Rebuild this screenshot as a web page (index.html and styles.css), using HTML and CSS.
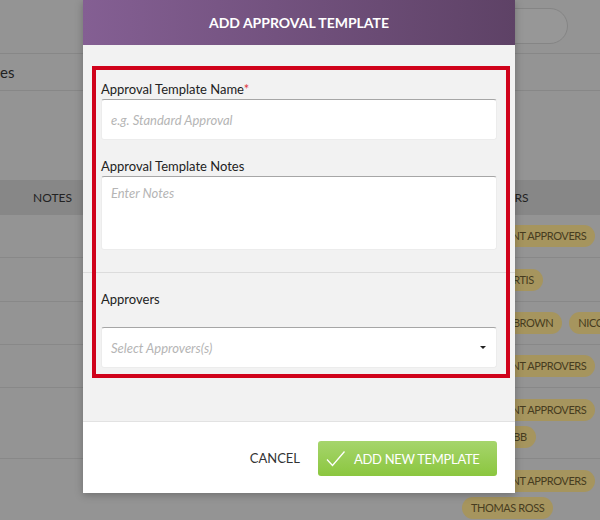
FILE: index.html
```html
<!DOCTYPE html>
<html>
<head>
<meta charset="utf-8">
<link rel="stylesheet" href="styles.css">
</head>
<body>
<div class="page">
  <div class="topbar"><div class="search"></div></div>
  <div class="subbar"><span class="subtitle">es</span></div>
  <div class="spacer"></div>
  <div class="table">
    <div class="row head"><div class="c1">NOTES</div><div class="c2"></div><div class="c3">APPROVERS</div></div>
    <div class="row r1"><div class="c1"></div><div class="c2"></div><div class="c3"><span class="pill">ALL CLIENT APPROVERS</span></div></div>
    <div class="row r2"><div class="c1"></div><div class="c2"></div><div class="c3"><span class="pill">JANE CURTIS</span></div></div>
    <div class="row r3"><div class="c1"></div><div class="c2"></div><div class="c3"><span class="pill">ROBERT BROWN</span><span class="pill">NICOLE HART</span></div></div>
    <div class="row r4"><div class="c1"></div><div class="c2"></div><div class="c3"><span class="pill">ALL CLIENT APPROVERS</span></div></div>
    <div class="row r5"><div class="c1"></div><div class="c2"></div><div class="c3 stack"><span class="pill">ALL CLIENT APPROVERS</span><span class="pill">ANN WEBB</span></div></div>
    <div class="row r6"><div class="c1"></div><div class="c2"></div><div class="c3 stack"><span class="pill">ALL CLIENT APPROVERS</span><span class="pill">THOMAS ROSS</span></div></div>
  </div>

  <div class="modal">
    <div class="modal-head">ADD APPROVAL TEMPLATE</div>
    <div class="modal-body">
      <div class="field">
        <label class="label">Approval Template Name<span class="req">*</span></label>
        <div class="input"><span class="ph">e.g. Standard Approval</span></div>
      </div>
      <div class="field second">
        <label class="label">Approval Template Notes</label>
        <div class="input textarea"><span class="ph">Enter Notes</span></div>
      </div>
      <div class="sep"></div>
      <div class="field third">
        <label class="label">Approvers</label>
        <div class="input select"><span class="ph">Select Approvers(s)</span><span class="caret"></span></div>
      </div>
      <div class="highlight"></div>
    </div>
    <div class="modal-foot">
      <span class="cancel">CANCEL</span>
      <span class="btn">
        <svg width="20" height="18" viewBox="0 0 20 18"><path d="M1 9.5 L6.5 15.5 L18.5 1.5" fill="none" stroke="#fff" stroke-width="1.3"/></svg>
        ADD NEW TEMPLATE
      </span>
    </div>
  </div>
</div>
</body>
</html>
```

FILE: styles.css
```css
* { box-sizing: border-box; }
html, body { margin: 0; padding: 0; }
body { font-family: Lato, "Open Sans", sans-serif; }
.page {
  position: relative;
  width: 600px;
  height: 520px;
  overflow: hidden;
  background: #949494;
}
.topbar {
  height: 54px;
  border-bottom: 1px solid #878787;
  display: flex;
  justify-content: flex-end;
}
.search {
  width: 260px;
  height: 36px;
  margin-top: 8px;
  margin-right: 32px;
  border: 1px solid #858585;
  border-radius: 18px;
  background: #979797;
}
.subbar {
  height: 37px;
  border-bottom: 1px solid #878787;
  display: flex;
  align-items: center;
}
.subtitle {
  font-size: 15px;
  color: #222;
  margin-top: -1px;
}
.spacer { height: 89px; }
.table { width: 700px; }
.row {
  display: grid;
  grid-template-columns: 100px 362px 238px;
  border-bottom: 1px solid #888;
}
.row.head {
  height: 35px;
  background: #878787;
  border-bottom: none;
  align-items: center;
  font-size: 12px;
  color: #222;
}
.head .c1 { padding-left: 33px; }
.head .c3 { margin-left: -2px; }
.c3 {
  display: flex;
  flex-wrap: nowrap;
  align-items: center;
  gap: 7px;
}
.c3.stack {
  flex-direction: column;
  align-items: flex-start;
  justify-content: center;
  gap: 5px;
}
.r1 { height: 43px; }
.r2 { height: 44px; }
.r3 { height: 43px; }
.r4 { height: 43px; }
.r5 { height: 71px; }
.r6 { height: 80px; }
.r6 .c3 { justify-content: flex-start; padding-top: 11px; }
.pill {
  display: inline-block;
  height: 22px;
  line-height: 22px;
  padding: 0 9px;
  border-radius: 11px;
  background: #a6955e;
  color: #463c20;
  font-size: 11px;
  letter-spacing: -0.4px;
  white-space: nowrap;
}

.modal {
  position: absolute;
  left: 83px;
  top: 0;
  width: 432px;
  height: 493px;
  display: flex;
  flex-direction: column;
  background: #fff;
  box-shadow: 0 2px 8px rgba(0,0,0,0.25);
}
.modal-head {
  height: 45px;
  flex: none;
  background: linear-gradient(90deg, #845f93 0%, #5e4266 100%);
  color: #fff;
  font-weight: bold;
  font-size: 14px;
  display: flex;
  align-items: center;
  justify-content: center;
}
.modal-body {
  position: relative;
  flex: 1;
  background: #f2f2f2;
  padding: 35px 18px 0;
}
.label {
  display: block;
  font-size: 13px;
  line-height: 18px;
  color: #222;
  margin-bottom: 1px;
}
.req { color: #e0383e; }
.input {
  height: 41px;
  background: #fff;
  border: 1px solid #ececec;
  border-top-color: #a6a6a6;
  border-radius: 3px;
  display: flex;
  align-items: center;
  padding: 0 9px;
  position: relative;
}
.ph {
  font-style: italic;
  font-size: 13px;
  color: #b5b5b5;
}
.field.second { margin-top: 17px; }
.textarea {
  height: 74px;
  align-items: flex-start;
  padding-top: 8px;
}
.sep {
  margin: 22px -18px 0;
  border-top: 1px solid #dcdcdc;
}
.field.third { padding-top: 17px; }
.field.third .label { margin-bottom: 19px; }
.select { justify-content: space-between; padding-right: 10px; }
.caret {
  width: 0;
  height: 0;
  border-left: 3px solid transparent;
  border-right: 3px solid transparent;
  border-top: 3px solid #222;
}
.highlight {
  position: absolute;
  left: 9px;
  top: 21px;
  width: 418px;
  height: 312px;
  border: 4px solid #d0021b;
  pointer-events: none;
}
.modal-foot {
  height: 72px;
  flex: none;
  border-top: 1px solid #e2e2e2;
  display: flex;
  align-items: center;
  justify-content: flex-end;
  padding-right: 18px;
  gap: 18px;
}
.cancel {
  font-size: 13px;
  color: #333;
}
.btn {
  width: 179px;
  height: 35px;
  border-radius: 3px;
  background: linear-gradient(180deg, #a6d56c 0%, #8bc63f 100%);
  color: #fff;
  font-size: 13px;
  letter-spacing: -0.3px;
  display: flex;
  align-items: center;
  gap: 8px;
  padding-left: 8px;
  margin-top: 2px;
}
.btn svg { margin-top: 1px; }
```
